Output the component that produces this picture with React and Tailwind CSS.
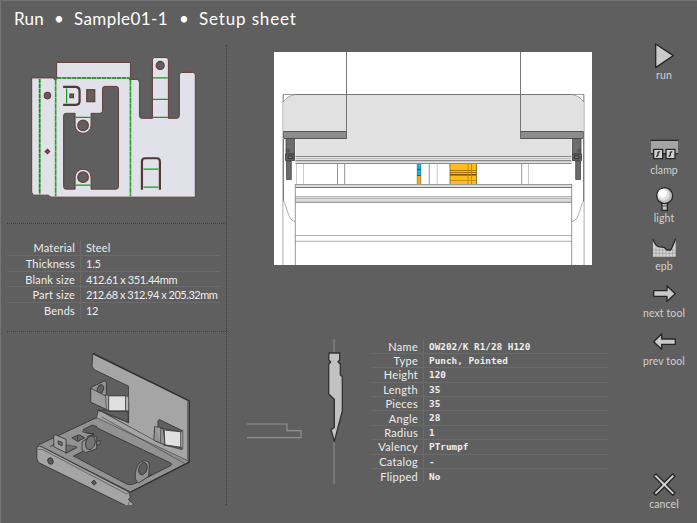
const partRows = [
  ['Material', 'Steel', 'tracking-[0.1px]'],
  ['Thickness', '1.5', 'tracking-[-0.2px]'],
  ['Blank size', '412.61 x 351.44mm', 'tracking-[-0.42px]'],
  ['Part size', '212.68 x 312.94 x 205.32mm', 'tracking-[-0.48px]'],
  ['Bends', '12', 'tracking-[-0.3px]'],
];

const toolRows = [
  ['Name', 'OW202/K R1/28 H120'],
  ['Type', 'Punch, Pointed'],
  ['Height', '120'],
  ['Length', '35'],
  ['Pieces', '35'],
  ['Angle', '28'],
  ['Radius', '1'],
  ['Valency', 'PTrumpf'],
  ['Catalog', '-'],
  ['Flipped', 'No'],
];

function BlankDrawing() {
  return (
    <svg className="block h-[178px] w-[226px]" viewBox="0 45 226 178" fill="none">
      <g stroke="#653c3c" strokeWidth="1">
        <path
          fill="#e1e1e9"
          d="M31.5 78H53L55 80L57.500 78.500L56.500 76V62.500H130.500V76L129.500 79.500H137Q139.500 80 139.500 83V116Q139.500 118.500 142 118.500H152.500V60Q152.500 57.500 155 57.500H166Q168.500 57.500 168.500 60V118.500H177Q179.500 118.500 179.500 116V75Q180 72.500 182 72.500H193Q195.500 72.500 195.500 75V197.500H51L48 195.500H35Q31.500 195.500 31.500 191Z"
        />
        <path
          fill="#5f5f5f"
          d="M105 86.500H116Q118.500 86.500 118.500 89V187Q118.500 189.500 116 189.500H91V177.500A8 8 0 0 0 75 177.500V189.500H66Q63.500 189.500 63.500 187V116Q63.500 113.500 66 113.500H75V125.500A8 8 0 0 0 91 125.500V113.500H100Q102.500 113.500 102.500 111V89Q102.500 86.500 105 86.500Z"
        />
        <g fill="#5f5f5f" strokeWidth="1.2">
          <circle cx="83" cy="125.500" r="5.300" />
          <circle cx="83" cy="177.500" r="5.300" />
          <circle cx="160.300" cy="65.500" r="4" />
          <circle cx="47.300" cy="95.700" r="3.200" />
          <path d="M47.300 149.500L49.500 151.700L47.300 153.900L45.100 151.700Z" />
          <rect x="86.700" y="89.800" width="8" height="12" />
          <rect x="69.800" y="94.200" width="3.600" height="3.600" />
        </g>
        <path strokeWidth="2.200" stroke="#51393a" d="M63 87H76Q79.500 87.500 79.500 91V101.500Q79.500 105 76 105H63" />
        <path strokeWidth="2.200" stroke="#51393a" d="M142 190V162Q142 158.500 145 158.500H157Q160 158.500 160 162V190" />
      </g>
      <path
        d="M75.500 117.500H90.500M75.500 185.500H90.500M66.500 88.500V103.500M153 78H168M153 99.500H168M153 117.500H168M143.500 169.500H158.500M143.500 187.500H158.500"
        stroke="#169b16"
        strokeWidth="1.200"
      />
      <path d="M57 78H129.500M39.500 79V194.500M55.500 80V196.500M130.500 80V196.500" stroke="#7fc082" strokeWidth="1.800" />
      <path d="M39.500 79V194.500M57 78H129.500" stroke="#0c950c" strokeWidth="1.600" strokeDasharray="4 1" />
      <path d="M55.500 80V196.500M130.500 80V196.500" stroke="#2aa02a" strokeWidth="1.300" strokeDasharray="5 1" />
    </svg>
  );
}

function BentPart() {
  return (
    <svg className="ml-[20px] block h-[173px] w-[200px]" viewBox="0 -21 600 519" stroke="#303030" strokeWidth="2.400" strokeLinejoin="round">
      <path fill="#a5a5a5" d="M218 46Q219 42 225 45L508 186V370L500 375L234 238V214L326 252V142L226 94Q218 89 216 82Z" />
      <path fill="#929292" d="M234 216L250 220L500 362L508 370L332 460L62 323L50 326L56 318L226 238L234 236Z" />
      <path fill="#a5a5a5" d="M234 216L244 218L502 358L508 368L230 237Z" strokeWidth="1.600" />
      <path fill="#a5a5a5" stroke="none" d="M327 190H416V315L502 362L506 366V190L416 150L327 142Z" />
      <path fill="none" strokeWidth="4" d="M218 44L508 186V370L332 460" />
      <path fill="none" strokeWidth="1.600" d="M503 188V362M244 234L494 374" />
      <path fill="#5f5f5f" d="M190 272L216 259L230 263V267L454 374Q458 378 452 381L392 411L350 432Q330 442 320 436L160 352L188 338L192 304L222 286L202 283Z" />
      <path fill="#929292" stroke="none" d="M188 284L202 284L222 287L192 304L188 338L162 351L140 340L160 300Z" />
      <path fill="none" d="M190 272L188 279L202 283L222 286L206 292M188 338L160 352" />
      <path fill="#929292" d="M350 428Q344 422 346 404Q350 370 374 366Q391 366 388 388L386 412L394 408L356 433Z" />
      <ellipse fill="#5f5f5f" cx="369" cy="390" rx="12" ry="19" transform="rotate(18 369 390)" />
      <path fill="#929292" d="M186 310L203 298V292Q216 288 230 294V330L196 342L186 334Z" />
      <ellipse fill="#747474" cx="211" cy="312" rx="14" ry="21" transform="rotate(18 211 312)" />
      <path fill="#808080" d="M230 307L240 306Q244 312 238 318L230 320Z" />
      <path fill="#686868" d="M155 297L177 288L194 297L173 308Z" />
      <path d="M173 290V307M90 324L106 314V291L136 304V344L172 326" fill="none" />
      <path fill="#a0a0a0" d="M101 291L106 288L138 302V342L101 324Z" />
      <path fill="#707070" d="M114 306L126 311V321L114 316Z" />
      <path fill="#707070" strokeWidth="1.600" d="M138 318L170 324L138 342Z" />
      <path fill="#a5a5a5" d="M50 326Q56 318 66 325L328 461L331 476Q322 480 329 487L340 495Q338 503 326 505L56 372L50 361Z" />
      <path fill="none" strokeWidth="1.600" d="M54 332L66 332L320 466L330 460M327 490L326 502" />
      <ellipse fill="#5a5a5a" cx="91" cy="367" rx="8" ry="10" transform="rotate(-20 91 367)" />
      <path fill="#5a5a5a" d="M222 424L229 433L222 440L214 431Z" />
      <path fill="#929292" d="M212 146L256 125L259 132V168L232 180L212 170Z" />
      <ellipse fill="#606060" cx="241" cy="151" rx="9" ry="14" transform="rotate(18 241 151)" />
      <path fill="#9e9e9e" d="M212 148L262 174L264 214L212 190Z" />
      <path fill="#a0a0a0" d="M256 168L268 170V214L259 213Z" strokeWidth="1.600" />
      <path fill="#e0e0e0" d="M266 171H317V216H266Z" />
      <path fill="#b7b7b7" d="M317 171L326 174V216H317Z" strokeWidth="1.600" />
      <path fill="#5f5f5f" d="M259 214L267 218H324V250L236 214Z" strokeWidth="1.600" />
      <path fill="#5f5f5f" d="M414 265V246L418 242L488 276L486 282L434 270Z" />
      <path fill="#929292" d="M404 264L430 270L436 319L406 307Q401 304 402 298Z" />
      <path fill="#9d9d9d" strokeWidth="1.600" d="M404 264L422 266V313" />
      <path fill="#e0e0e0" d="M433 274L484 279V326L435 319Z" />
      <path fill="#999" strokeWidth="1.600" d="M482 280L489 275V330L482 326Z" />
      <path fill="#5f5f5f" d="M430 318L484 326L487 333Z" strokeWidth="1.600" />
    </svg>
  );
}

function MachineSide() {
  return (
    <g>
      <path d="M283.500 131.500H346.500V138.500H283.500Z" fill="#8c8c8c" stroke="#4a4a4a" strokeWidth=".9" />
      <path d="M346.500 52V139" stroke="#6a6a6a" strokeWidth=".9" />
      <path d="M283.500 102V94.500H295Q287 96 283.500 102Z" fill="#fff" stroke="#888" strokeWidth=".7" />
      <path d="M282.900 94.500V265" stroke="#999" strokeWidth=".8" />
      <path d="M283.400 139V201" stroke="#666" strokeWidth=".9" />
      <path d="M283.500 201C287 206 288 221 295 221.500" fill="none" stroke="#999" strokeWidth=".8" />
      <path d="M295.300 184V265" stroke="#8a8a8a" strokeWidth=".9" />
      <path d="M286 138.500H294.500V154H286Z" fill="#6d6d6d" stroke="#444" strokeWidth=".8" />
      <circle cx="287.800" cy="150.500" r="1.500" fill="none" stroke="#333" strokeWidth=".7" />
      <path d="M285.500 154H294.500V160.500H285.500Z" fill="#606060" stroke="#3a3a3a" strokeWidth=".8" />
      <path d="M288 156H292.500V158.500H288Z" fill="#777" stroke="#2a2a2a" strokeWidth=".8" />
      <path d="M286.500 161H291.300V179.500H286.500Z" fill="#6c6c6c" stroke="#484848" strokeWidth=".8" />
    </g>
  );
}

function MachineView() {
  return (
    <svg className="ml-[47px] mt-[7px] block h-[213px] w-[318px]" viewBox="274 52 318 213">
      <rect x="274" y="52" width="318" height="213" fill="#fff" />
      <path d="M283.500 94.500H583.500V138.500H571.500V164H295.500V138.500H283.500Z" fill="#e1e1e1" />
      <path d="M283 94.500H584" stroke="#777" />
      <path d="M295.500 156.500H571.500" stroke="#8c8c8c" />
      <path d="M295.500 158.500H571.500" stroke="#c4c4c4" />
      <path d="M295.500 160.700H571.500" stroke="#8a8a8a" strokeWidth="1.200" />
      <path d="M295.500 163.500H571.500" stroke="#8a8a8a" />
      <path d="M296.500 164V184M303.500 164V184M437.200 164V184M528.500 164V184" stroke="#bbb" strokeWidth=".8" />
      <path d="M337.500 164V184M344.700 164V184M429.300 164V184M521.700 164V184" stroke="#8a8a8a" strokeWidth=".9" />
      <rect x="295" y="184" width="277" height="3.500" fill="#dedede" />
      <path d="M295 184.500H572" stroke="#999" />
      <path d="M295 187.500H572" stroke="#777" />
      <rect x="295" y="196" width="277" height="6.500" fill="#dadada" />
      <path d="M295 196.500H572M295 198.500H572" stroke="#b0b0b0" strokeWidth=".8" />
      <path d="M295 202.300H572" stroke="#8a8a8a" />
      <path d="M295 235.500H572M295 241.300H572" stroke="#a4a4a4" strokeWidth=".9" />
      <rect x="417" y="164" width="4" height="11" fill="#18b5e4" />
      <rect x="417" y="175" width="4" height="9" fill="#f5ac12" />
      <path d="M417 169.500H421M417 175.500H421" stroke="#17445a" strokeWidth=".8" />
      <path d="M417.200 164V184M420.800 164V184" stroke="#46606a" strokeWidth=".5" />
      <rect x="450" y="164" width="26.500" height="20" fill="#ffbd18" />
      <path d="M450 170.500H476.500M450 172.500H476.500" stroke="#a36c00" strokeWidth=".9" />
      <path d="M450 174.800H476.500" stroke="#714500" strokeWidth="1.400" />
      <path d="M468 164V184M471.500 164V184M450 180.500H476.500" stroke="#bc8200" strokeWidth=".8" />
      <path d="M450 164V184M476.500 164V184" stroke="#806020" strokeWidth=".8" />
      <MachineSide />
      <g transform="translate(867 0) scale(-1 1)">
        <MachineSide />
      </g>
    </svg>
  );
}

function PunchProfile() {
  return (
    <svg className="block h-[165px] w-[130px] shrink-0" viewBox="0 0 390 495" fill="none">
      <path d="M297 28V66M297 336V462" stroke="#858585" strokeWidth="4" />
      <path d="M36 282H156V302H198V323H36" stroke="#929292" strokeWidth="3.500" />
      <path
        d="M282 69H314V90L309 96L316 103V135L322 140V243L298 334L288 299L298 292V208L281 192V103L287 96L281 89Z"
        fill="#c2c2c2"
        stroke="#333"
        strokeWidth="4"
        strokeLinejoin="round"
      />
    </svg>
  );
}

const clampGlyph = (
  <>
    <path d="M57 331H138V372H57Z" fill="#a4a4a4" />
    <path d="M56 332H139" stroke="#262626" strokeWidth="4" />
    <path d="M57 372H138" stroke="#262626" strokeWidth="4" />
    <path d="M65 359H92V387H65ZM102 359H129V387H102Z" fill="#d0d0d0" stroke="#262626" strokeWidth="4" />
    <path d="M84 366L78 368V376L73 381M121 366L115 368V376L110 381" stroke="#262626" strokeWidth="4" fill="none" />
  </>
);

const lightGlyph = (
  <>
    <path d="M90 518H106V541H90Z" fill="#c8c8c8" stroke="#262626" strokeWidth="4" />
    <path d="M91 528H105" stroke="#555" strokeWidth="3" />
    <circle cx="98" cy="497" r="24" fill="#bdbdbd" stroke="#262626" strokeWidth="4" />
    <circle cx="95" cy="494" r="18" fill="#dedede" />
    <circle cx="92" cy="490" r="13" fill="#fff" />
  </>
);

const epbGlyph = (
  <>
    <path d="M63 28L70 43L79 50L96 52L105 60L116 60L123 46L131 28V80H63Z" fill="#d4d4d4" />
    <path d="M72 44V80M82 50V80M92 52V80M102 59V80M112 60V80M122 48V80M63 70H131M63 60H131" stroke="#9a9a9a" strokeWidth="2" />
    <path d="M62 26L70 43L79 50L96 52L105 60L116 60L123 46L131 26" fill="none" stroke="#262626" strokeWidth="4" />
  </>
);

const actions = [
  ['run', '24 12 144 102', <path d="M71 42L124 77L71 113Z" fill="#cacaca" stroke="#262626" strokeWidth="4" />],
  null,
  ['clamp', '24 298 144 102', clampGlyph],
  ['light', '24 441 144 102', lightGlyph],
  ['epb', '24 -15 144 102', epbGlyph],
  ['next tool', '24 128 144 102', <path d="M65 184H105V170L130 193L105 216V201H65Z" fill="#cacaca" stroke="#262626" strokeWidth="4" />],
  ['prev tool', '24 271 144 102', <path d="M130 328H89V313L65 336L89 359V344H130Z" fill="#cacaca" stroke="#262626" strokeWidth="4" />],
  null,
  null,
  ['cancel', '24 700 144 102', <path d="M72 733L97 758L122 733L129 740L104 765L129 790L122 797L97 772L72 797L65 790L90 765L65 740Z" fill="#d2d2d2" stroke="#262626" strokeWidth="4" />],
];

export default function App() {
  return (
    <div className="flex h-[523px] w-[697px] flex-col overflow-hidden border-l border-t border-[#747474] bg-[#5f5f5f] font-['Lato',sans-serif] text-[11px] text-[#eeeeee]">
      <div className="flex min-h-0 flex-1">
        <div className="flex w-[634px] flex-col">
          <h1 className="flex h-[44px] shrink-0 items-center pb-[9px] pl-[13px] text-[17px] text-white">
            <span className="w-[40px] tracking-[0.2px]">Run</span>
            <span className="w-[20px]">•</span>
            <span className="w-[105px] tracking-[0.4px]">Sample01-1</span>
            <span className="w-[20px]">•</span>
            <span className="tracking-[0.85px]">Setup sheet</span>
          </h1>
          <div className="flex">
            <section className="-ml-px flex h-[460px] w-[227px] shrink-0 flex-col border-r border-dotted border-[#3c3c3c]">
              <BlankDrawing />
              <div className="ml-[7px] flex h-[110px] flex-col border-y border-dotted border-[#3c3c3c] pt-[17px]">
                {partRows.map(([label, value, tracking], i) => (
                  <div key={label} className={`flex h-[15.6px] w-[213px] items-center leading-none ${i < 4 ? 'border-b border-[#6b6b6b]' : ''}`}>
                    <span className="w-[68px] shrink-0 text-right tracking-[0.2px]">{label}</span>
                    <span className="ml-[5px] h-full w-px shrink-0 bg-[#6b6b6b]" />
                    <span className={`ml-[5px] whitespace-nowrap ${tracking}`}>{value}</span>
                  </div>
                ))}
              </div>
              <BentPart />
            </section>
            <section className="flex flex-1 flex-col">
              <MachineView />
              <div className="mt-[65px] flex">
                <div className="ml-[8px]">
                  <PunchProfile />
                </div>
                <div className="ml-[6px] pt-[9.5px]">
                  {toolRows.map(([label, value], i) => (
                    <div key={label} className={`flex h-[14.4px] w-[238px] items-center leading-none ${i < 9 ? 'border-b border-[#6b6b6b]' : ''}`}>
                      <span className="w-[47px] shrink-0 text-right tracking-[0.3px]">{label}</span>
                      <span className="ml-[5px] h-full w-px bg-[#6b6b6b]" />
                      <span className="ml-[5px] whitespace-pre font-['DejaVu_Sans_Mono',monospace] text-[9.35px] font-bold">{value}</span>
                    </div>
                  ))}
                </div>
              </div>
            </section>
          </div>
        </div>
        <nav className="mt-[33px] flex w-[58px] flex-col items-center">
          {actions.map((action, i) =>
            action ? (
              <button key={i} className="flex h-[47.7px] w-[58px] shrink-0 flex-col items-center text-[#d0d0d0]">
                <svg className="block h-[34px] w-[48px] shrink-0 overflow-visible" viewBox={action[1]} strokeLinejoin="round">
                  {action[2]}
                </svg>
                <span className="whitespace-nowrap text-[10.5px] leading-[14px] tracking-[0.1px]">{action[0]}</span>
              </button>
            ) : (
              <span key={i} className="h-[47.7px] shrink-0" />
            )
          )}
        </nav>
      </div>
    </div>
  );
}
